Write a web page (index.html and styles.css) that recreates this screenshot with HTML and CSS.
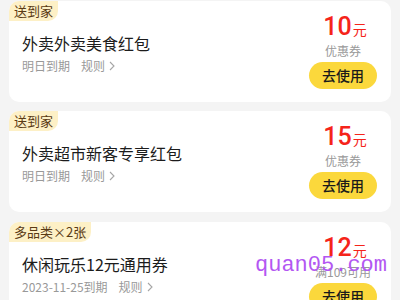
FILE: index.html
```html
<!DOCTYPE html>
<html lang="zh">
<head>
<meta charset="utf-8">
<link rel="stylesheet" href="styles.css">
</head>
<body>
<div class="list">
  <div class="card">
    <div class="left">
      <span class="tag">送到家</span>
      <div class="title">外卖外卖美食红包</div>
      <div class="meta"><span>明日到期</span><span class="rule">规则<svg class="chev" width="6" height="10" viewBox="0 0 6 10"><path d="M1 1l4 4-4 4" fill="none" stroke="#a6a6a6" stroke-width="1.1"/></svg></span></div>
    </div>
    <div class="right">
      <div class="amount"><span class="num">10</span><span class="unit">元</span></div>
      <div class="label">优惠券</div>
      <div class="btn">去使用</div>
    </div>
  </div>
  <div class="card">
    <div class="left">
      <span class="tag">送到家</span>
      <div class="title">外卖超市新客专享红包</div>
      <div class="meta"><span>明日到期</span><span class="rule">规则<svg class="chev" width="6" height="10" viewBox="0 0 6 10"><path d="M1 1l4 4-4 4" fill="none" stroke="#a6a6a6" stroke-width="1.1"/></svg></span></div>
    </div>
    <div class="right">
      <div class="amount"><span class="num">15</span><span class="unit">元</span></div>
      <div class="label">优惠券</div>
      <div class="btn">去使用</div>
    </div>
  </div>
  <div class="card card3">
    <div class="left">
      <span class="tag">多品类×2张</span>
      <div class="title">休闲玩乐12元通用券</div>
      <div class="meta"><span>2023-11-25到期</span><span class="rule">规则<svg class="chev" width="6" height="10" viewBox="0 0 6 10"><path d="M1 1l4 4-4 4" fill="none" stroke="#a6a6a6" stroke-width="1.1"/></svg></span></div>
    </div>
    <div class="right">
      <div class="amount"><span class="num">12</span><span class="unit">元</span></div>
      <div class="label">满109可用</div>
      <div class="btn">去使用</div>
    </div>
  </div>
</div>
<div class="watermark">quan05.com</div>
</body>
</html>
```
FILE: styles.css
```css
html, body {
  margin: 0;
  padding: 0;
  background: #f4f4f4;
  overflow: hidden;
}
body {
  width: 400px;
  height: 300px;
  position: relative;
  font-family: "Noto Sans CJK SC", "Noto Sans", sans-serif;
}
.list {
  display: flex;
  flex-direction: column;
  gap: 9px;
  padding: 1px 9px 0 9px;
}
.card {
  background: #fff;
  border-radius: 10px;
  height: 101px;
  display: flex;
  justify-content: space-between;
  flex-shrink: 0;
}
.card3 {
  margin-top: 1px;
}
.left {
  display: flex;
  flex-direction: column;
  align-items: flex-start;
}
.tag {
  display: block;
  height: 20px;
  line-height: 20px;
  padding: 0 5px;
  font-size: 13px;
  color: #5a3a14;
  background: #fdf0c6;
  border-radius: 10px 0 10px 0;
}
.title {
  margin: 11px 0 0 13px;
  font-size: 16px;
  line-height: 22px;
  color: #1c1c1c;
}
.meta {
  margin: 4px 0 0 13px;
  font-size: 12px;
  line-height: 16px;
  color: #999;
  display: flex;
  gap: 11px;
}
.rule {
  display: flex;
  align-items: center;
  gap: 4px;
}
.chev {
  display: block;
}
.right {
  width: 68px;
  margin-right: 14px;
  padding-top: 12px;
  display: flex;
  flex-direction: column;
  align-items: center;
}
.amount {
  height: 28px;
  line-height: 28px;
  color: #f5241a;
  white-space: nowrap;
  margin-left: 4px;
}
.num {
  font-family: "Roboto", "Liberation Sans", sans-serif;
  font-size: 25px;
  font-weight: 500;
}
.unit {
  font-size: 14px;
  margin-left: 1px;
}
.label {
  margin-top: 2px;
  font-size: 12px;
  line-height: 16px;
  color: #999;
  white-space: nowrap;
}
.btn {
  margin-top: 3px;
  width: 68px;
  height: 27px;
  line-height: 27px;
  border-radius: 14px;
  background: #fbd83c;
  text-align: center;
  font-size: 14px;
  font-weight: 500;
  color: #1a1a1a;
}
.watermark {
  position: absolute;
  left: 255px;
  top: 254px;
  font-family: "Liberation Mono", "DejaVu Sans Mono", monospace;
  font-size: 22px;
  line-height: 24px;
  color: #b357f2;
}
```
